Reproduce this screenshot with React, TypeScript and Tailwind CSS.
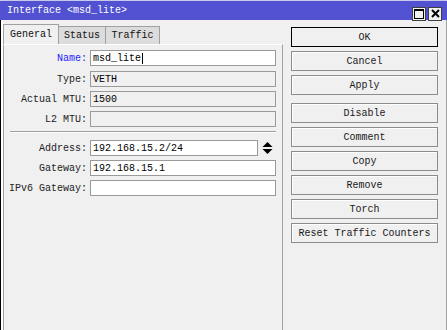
import { useState } from "react";

const font = { fontFamily: '"Liberation Mono", "DejaVu Sans Mono", monospace' };

function Row({
  label,
  value,
  editable,
  blue,
  cursor,
  extra,
}: {
  label: string;
  value: string;
  editable?: boolean;
  blue?: boolean;
  cursor?: boolean;
  extra?: React.ReactNode;
}) {
  return (
    <div className="flex items-center h-[16px]">
      <div
        className={`w-[84px] text-right pr-[1px] ${blue ? "text-[#1d1dff]" : "text-[#222]"}`}
      >
        {label}
      </div>
      <div
        className={`ml-[2px] h-[16px] border border-[#9a9a9a] flex items-center pl-[2px] text-black ${
          editable ? "bg-white" : "bg-[#f0f0f0]"
        } ${extra ? "w-[168px]" : "w-[186px]"}`}
      >
        <span>{value}</span>
        {cursor && <span className="w-px h-[11px] bg-black ml-px" />}
      </div>
      {extra}
    </div>
  );
}

function UpDown() {
  return (
    <svg width="11" height="12" viewBox="0 0 11 12" className="ml-[4px]">
      <polygon points="5.5,0 10.5,5 0.5,5" fill="#000" />
      <polygon points="0.5,7 10.5,7 5.5,12" fill="#000" />
    </svg>
  );
}

export default function App() {
  const [tab, setTab] = useState("General");
  const buttons = [
    ["OK", "Cancel", "Apply"],
    ["Disable", "Comment", "Copy", "Remove", "Torch", "Reset Traffic Counters"],
  ];

  return (
    <div className="w-[447px] h-[330px] bg-[#f0f0f0] text-[10px] overflow-hidden" style={font}>
      {/* title bar */}
      <div className="h-[20px] bg-[#5151d1] border-t border-[#c8c8e8] flex items-center pl-[7px] pr-[5px]">
        <span className="text-white leading-none">Interface &lt;msd_lite&gt;</span>
        <div className="ml-auto flex gap-[2px] mt-[6px]">
          <div className="w-[14px] h-[14px] bg-[#f0f0f0] border border-[#404040] flex items-center justify-center">
            <svg width="10" height="10" viewBox="0 0 10 10">
              <rect x="0.5" y="0.5" width="9" height="9" fill="none" stroke="#000" strokeWidth="1" />
              <rect x="0" y="0" width="10" height="2" fill="#000" />
            </svg>
          </div>
          <div className="w-[14px] h-[14px] bg-[#f0f0f0] border border-[#404040] flex items-center justify-center">
            <svg width="9" height="9" viewBox="0 0 9 9">
              <path d="M1 1 L8 8 M8 1 L1 8" stroke="#000" strokeWidth="2" />
            </svg>
          </div>
        </div>
      </div>

      <div className="flex h-[310px] border-l border-black border-r border-r-[#a0a0a0]">
        {/* left column */}
        <div className="w-[282px] border-l-2 border-white flex flex-col">
          <div className="flex items-end h-[24px]">
            {["General", "Status", "Traffic"].map((t) => (
              <button
                key={t}
                onClick={() => setTab(t)}
                className={`border border-b-0 border-[#a0a0a0] px-[5px] flex items-center justify-center text-[#111] ${
                  tab === t ? "h-[20px] bg-[#f0f0f0] w-[56px]" : "h-[18px] bg-[#dcdcdc] -ml-px"
                } ${t === "Status" ? "w-[48px]" : t === "Traffic" ? "w-[55px]" : ""}`}
              >
                {t}
              </button>
            ))}
          </div>
          <div className="flex-1 border-l border-r border-[#a0a0a0] border-t border-t-white pt-[5px]">
            <div className="flex flex-col gap-[4px]">
              <div className="mb-px">
                <Row label="Name:" value="msd_lite" editable blue cursor />
              </div>
              <Row label="Type:" value="VETH" />
              <Row label="Actual MTU:" value="1500" />
              <Row label="L2 MTU:" value="" />
            </div>
            <div className="mx-[6px] mt-[4px] border-t border-[#a0a0a0] border-b border-b-white" />
            <div className="flex flex-col gap-[4px] mt-[7px]">
              <Row label="Address:" value="192.168.15.2/24" editable extra={<UpDown />} />
              <Row label="Gateway:" value="192.168.15.1" editable />
              <Row label="IPv6 Gateway:" value="" editable />
            </div>
          </div>
        </div>

        {/* right column */}
        <div className="flex flex-col pl-[8px] pt-[7px]">
          {buttons.map((group, gi) => (
            <div key={gi} className={`flex flex-col gap-[4px] ${gi ? "mt-[8px]" : ""}`}>
              {group.map((b) => (
                <button
                  key={b}
                  className={`w-[147px] h-[20px] bg-[#f0f0f0] text-[#1a1a1a] border ${
                    b === "OK" ? "border-black" : "border-[#8c8c8c] shadow-[inset_1px_1px_0_#ffffff]"
                  }`}
                >
                  {b}
                </button>
              ))}
            </div>
          ))}
        </div>
      </div>
    </div>
  );
}
